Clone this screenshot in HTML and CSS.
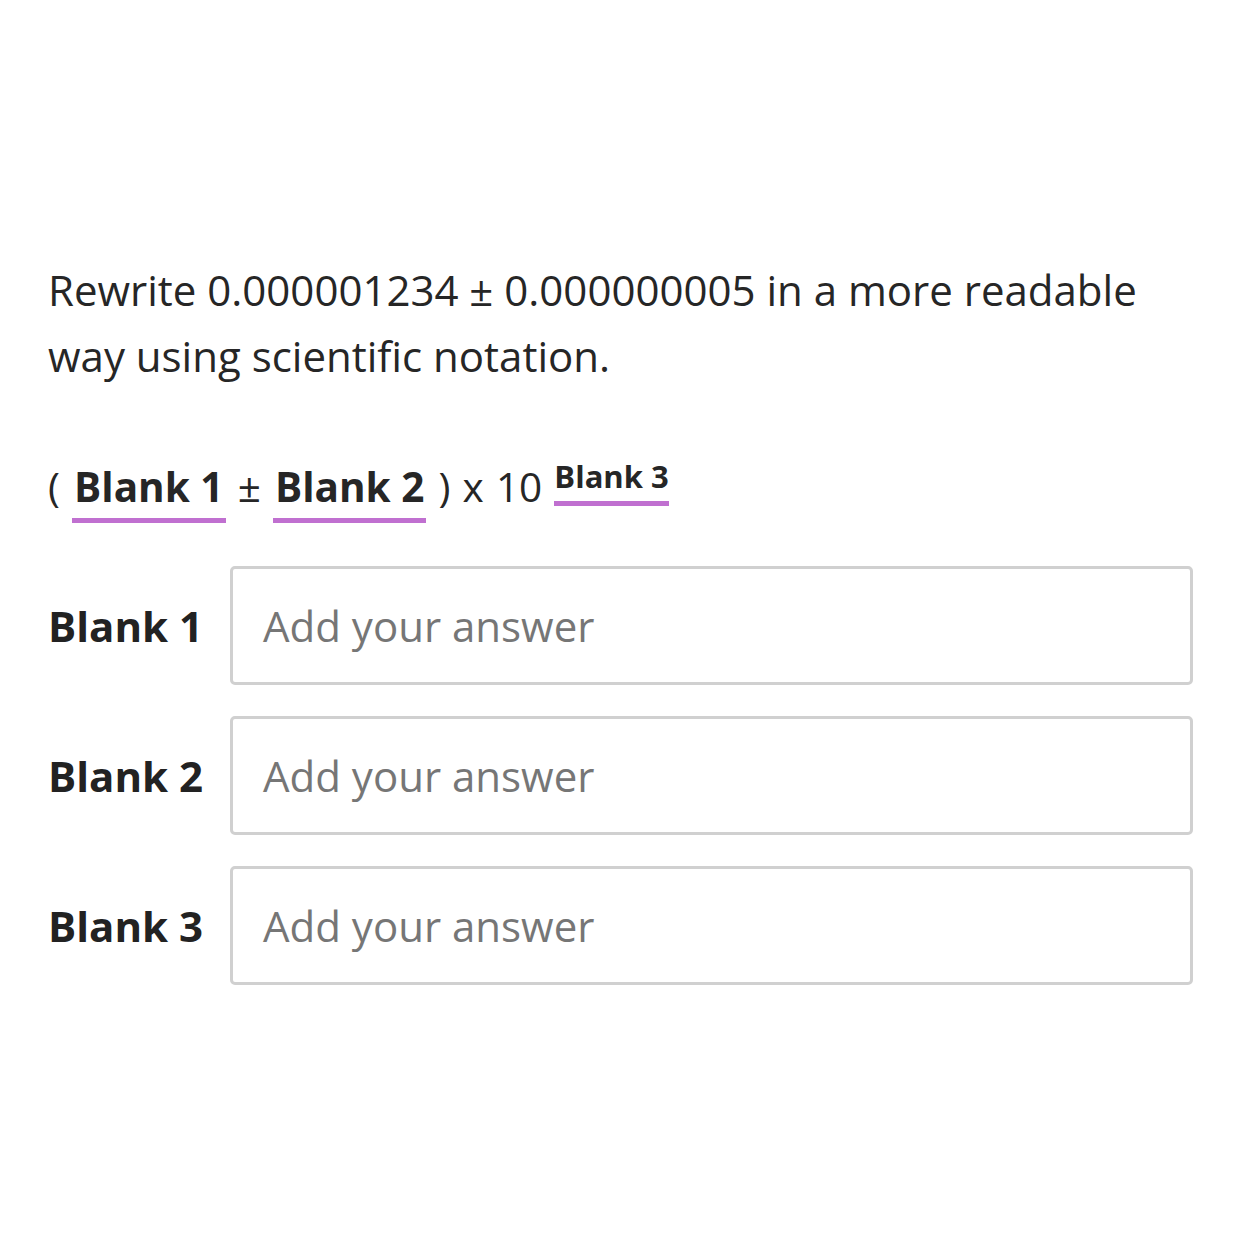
FILE: index.html
```html
<!DOCTYPE html>
<html>
<head>
<meta charset="utf-8">
<link rel="stylesheet" href="styles.css">
</head>
<body>
<div class="page">
  <p class="question">Rewrite 0.000001234 ± 0.000000005 in a more readable way using scientific notation.</p>
  <div class="equation">( <span class="blank">Blank 1</span> ± <span class="blank">Blank 2</span> ) x 10 <sup class="blank sup">Blank 3</sup></div>
  <div class="answers">
    <div class="row"><label class="label">Blank 1</label><div class="input">Add your answer</div></div>
    <div class="row"><label class="label">Blank 2</label><div class="input">Add your answer</div></div>
    <div class="row"><label class="label">Blank 3</label><div class="input">Add your answer</div></div>
  </div>
</div>
</body>
</html>
```
FILE: styles.css
```css
html, body {
  margin: 0;
  padding: 0;
  background: #fff;
}
body {
  font-family: "Open Sans", "Noto Sans", sans-serif;
  color: #262626;
}
.page {
  padding: 257px 48px 0 48px;
}
.question {
  margin: 0;
  font-size: 42px;
  line-height: 66px;
  width: 1130px;
}
.equation {
  margin-top: 70px;
  font-size: 40.5px;
  line-height: 56px;
  height: 60px;
  word-spacing: 1.6px;
}
.blank {
  font-weight: 700;
  display: inline-block;
  border-bottom: 5px solid #c070d0;
  padding: 0 2px 6px 2px;
  line-height: 50px;
  word-spacing: 0;
}
.sup {
  font-size: 31px;
  line-height: 32px;
  vertical-align: 14px;
  padding: 0 0 9px 0;
  border-bottom-width: 5px;
}
.answers {
  margin-top: 47px;
  display: flex;
  flex-direction: column;
  gap: 31px;
}
.row {
  display: flex;
  align-items: center;
}
.label {
  width: 182px;
  font-size: 42px;
  font-weight: 700;
  color: #222;
}
.input {
  flex: 1;
  margin-right: 1px;
  height: 113px;
  border: 3px solid #d0d0d0;
  border-radius: 5px;
  box-sizing: content-box;
  display: flex;
  align-items: center;
  padding-left: 30px;
  font-size: 42px;
  color: #767676;
}
```
